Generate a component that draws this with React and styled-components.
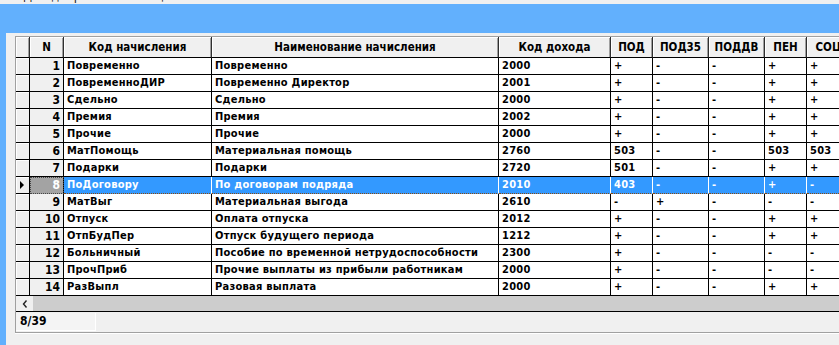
import styled, { createGlobalStyle } from "styled-components"

const GlobalStyle = createGlobalStyle`
  html, body {
    margin: 0;
    padding: 0;
    background: #f0f0f0;
  }
  body {
    font-family: "DejaVu Sans Condensed", "DejaVu Sans", "Liberation Sans", sans-serif;
    font-stretch: condensed;
  }
`

const COLS = "14px 34px 148px 287px 112px 42px 56px 56px 42px 44px 40px"

const columns = [
  { title: "" },
  { title: "N" },
  { title: "Код начисления" },
  { title: "Наименование начисления" },
  { title: "Код дохода" },
  { title: "ПОД" },
  { title: "ПОД35" },
  { title: "ПОДДВ" },
  { title: "ПЕН" },
  { title: "СОЦ" },
  { title: "" },
]

const rows = [
  ["Повременно", "Повременно", "2000", "+", "-", "-", "+", "+"],
  ["ПовременноДИР", "Повременно Директор", "2001", "+", "-", "-", "+", "+"],
  ["Сдельно", "Сдельно", "2000", "+", "-", "-", "+", "+"],
  ["Премия", "Премия", "2002", "+", "-", "-", "+", "+"],
  ["Прочие", "Прочие", "2000", "+", "-", "-", "+", "+"],
  ["МатПомощь", "Материальная помощь", "2760", "503", "-", "-", "503", "503"],
  ["Подарки", "Подарки", "2720", "501", "-", "-", "+", "+"],
  ["ПоДоговору", "По договорам подряда", "2010", "403", "-", "-", "+", "-"],
  ["МатВыг", "Материальная выгода", "2610", "-", "+", "-", "-", "-"],
  ["Отпуск", "Оплата отпуска", "2012", "+", "-", "-", "+", "+"],
  ["ОтпБудПер", "Отпуск будущего периода", "1212", "+", "-", "-", "+", "+"],
  ["Больничный", "Пособие по временной нетрудоспособности", "2300", "+", "-", "-", "-", "-"],
  ["ПрочПриб", "Прочие выплаты из прибыли работникам", "2000", "+", "-", "-", "-", "-"],
  ["РазВыпл", "Разовая выплата", "2000", "+", "-", "-", "+", "+"],
]

const SELECTED = 8

export default function App() {
  return (
    <>
      <GlobalStyle />
      <Screen>
        <TitleStrip>
          <TitleText>Э  Доходы физических лиц</TitleText>
        </TitleStrip>
        <Frame>
          <Client>
            <Panel>
              <Header>
                {columns.map((c, i) => (
                  <HeadCell key={i}>{c.title}</HeadCell>
                ))}
              </Header>
              {rows.map((r, i) => {
                const n = i + 1
                const sel = n === SELECTED
                return (
                  <Row key={n}>
                    <Indicator>{sel && <Arrow />}</Indicator>
                    <NumCell $selected={sel}>{n}</NumCell>
                    {r.map((v, j) => (
                      <Cell key={j} $selected={sel}>{v}</Cell>
                    ))}
                    <Cell $selected={sel} />
                  </Row>
                )
              })}
              <ScrollBar>
                <ScrollButton>
                  <svg width="6" height="8" viewBox="0 0 6 8">
                    <path d="M4.5 0.5 L1.5 4 L4.5 7.5" fill="none" stroke="#222" strokeWidth="1.4" />
                  </svg>
                </ScrollButton>
                <ScrollThumb />
              </ScrollBar>
              <StatusBar>
                <Counter>8/39</Counter>
              </StatusBar>
            </Panel>
          </Client>
        </Frame>
      </Screen>
    </>
  )
}

const Screen = styled.div`
  width: 839px;
  height: 345px;
  overflow: hidden;
  display: flex;
  flex-direction: column;
`

const TitleStrip = styled.div`
  height: 4px;
  background: #f0f0f0;
  overflow: hidden;
  padding-left: 9px;
`

const TitleText = styled.div`
  font-size: 12px;
  line-height: 12px;
  margin-top: -10px;
  color: #111;
  white-space: pre;
`

const Frame = styled.div`
  flex: 1;
  display: flex;
  background: #62b0fd;
  padding: 29px 0 0 6px;
  min-height: 0;
`

const Client = styled.div`
  flex: 1;
  background: #f0f0f0;
  padding: 3px 0 0 9px;
  min-width: 0;
`

const Panel = styled.div`
  border-left: 1px solid #a0a0a0;
  border-top: 1px solid #a0a0a0;
  border-bottom: 1px solid #a0a0a0;
  box-shadow: 0 1px 0 #ffffff;
  width: max-content;
  font-size: 11px;
  letter-spacing: 0.25px;
  font-weight: bold;
  color: #000;
`

const Header = styled.div`
  display: grid;
  grid-template-columns: ${COLS};
  height: 21px;
`

const HeadCell = styled.div`
  background: #f0f0f0;
  border-right: 1px solid #303030;
  border-bottom: 1px solid #000;
  box-shadow: inset 1px 1px 0 #ffffff, inset -1px 0 0 #a0a0a0;
  display: flex;
  align-items: center;
  justify-content: center;
  white-space: nowrap;
  overflow: hidden;
  font-size: 11.5px;
  letter-spacing: 0;
`

const Row = styled.div`
  display: grid;
  grid-template-columns: ${COLS};
  height: 17px;
`

const Indicator = styled.div`
  background: #f0f0f0;
  border-right: 1px solid #000;
  border-bottom: 1px solid #000;
  box-shadow: inset 1px 1px 0 #ffffff;
  display: flex;
  align-items: center;
  padding-left: 4px;
`

const Arrow = styled.span`
  width: 0;
  height: 0;
  border-top: 4px solid transparent;
  border-bottom: 4px solid transparent;
  border-left: 4px solid #000;
`

const NumCell = styled.div`
  background: ${(p) => (p.$selected ? "#a3a3a3" : "#f0f0f0")};
  color: ${(p) => (p.$selected ? "#ffffff" : "#000")};
  border-right: 1px solid #000;
  border-bottom: 1px ${(p) => (p.$selected ? "dotted" : "solid")} #000;
  outline: ${(p) => (p.$selected ? "1px dotted #444" : "none")};
  outline-offset: -1px;
  display: flex;
  align-items: center;
  justify-content: flex-end;
  padding-right: 3px;
  line-height: 16px;
  font-size: 12px;
  letter-spacing: 0;
`

const Cell = styled.div`
  background: ${(p) => (p.$selected ? "#3399ff" : "#ffffff")};
  color: ${(p) => (p.$selected ? "#ffffff" : "#000")};
  border-right: 1px solid ${(p) => (p.$selected ? "#ffffff" : "#000")};
  border-bottom: 1px ${(p) => (p.$selected ? "dotted #8a4a10" : "solid #000")};
  padding-left: 3px;
  line-height: 16px;
  white-space: nowrap;
  overflow: hidden;
`

const ScrollBar = styled.div`
  display: flex;
  height: 15px;
  border-bottom: 1px solid #000;
`

const ScrollButton = styled.div`
  width: 17px;
  background: #f0f0f0;
  display: flex;
  align-items: center;
  justify-content: center;
`

const ScrollThumb = styled.div`
  flex: 1;
  background: #cdcdcd;
`

const StatusBar = styled.div`
  height: 20px;
  padding-top: 1px;
  box-sizing: border-box;
  background: #f0f0f0;
`

const Counter = styled.div`
  width: 80px;
  height: 18px;
  box-sizing: border-box;
  background: #f4f4f4;
  border-right: 1px solid #ffffff;
  border-bottom: 1px solid #ffffff;
  padding-left: 4px;
  line-height: 17px;
  font-size: 12px;
  letter-spacing: 0;
`
